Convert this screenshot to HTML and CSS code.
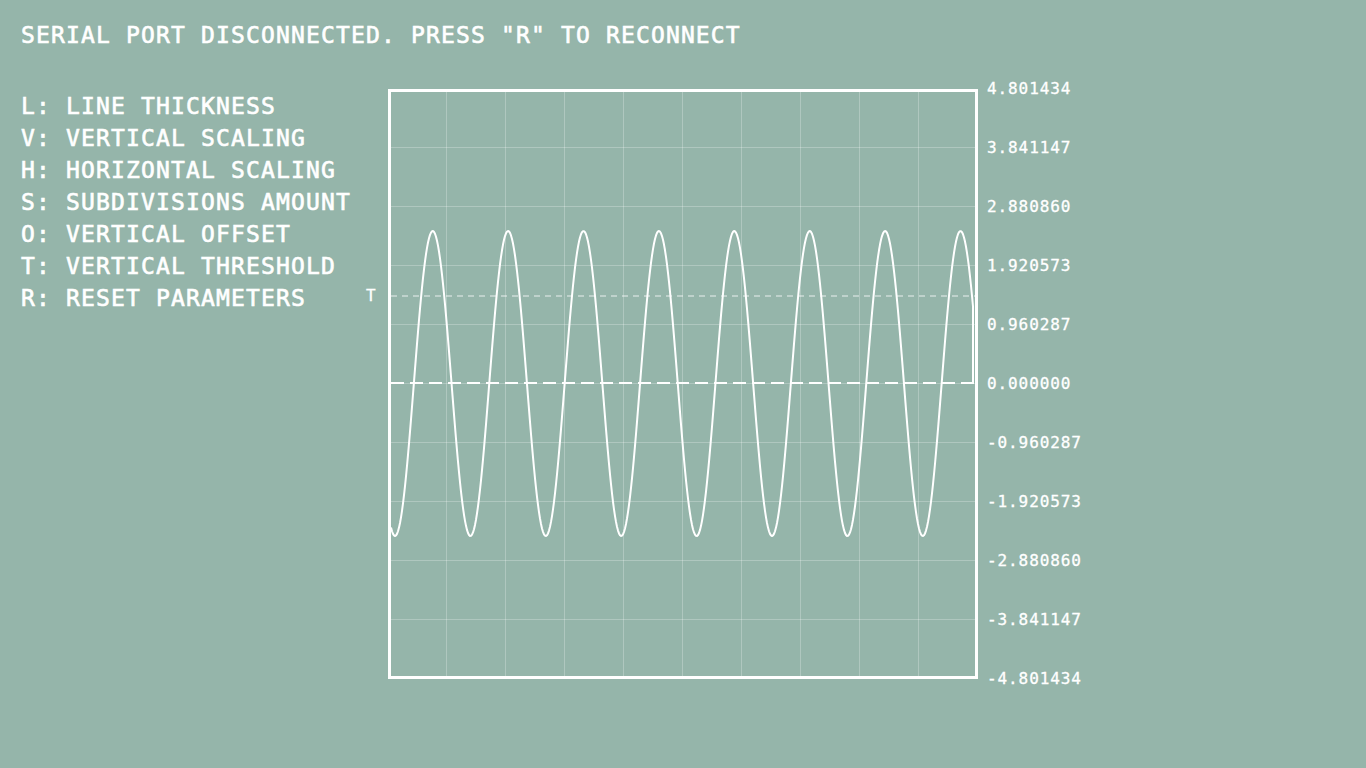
FILE: index.html
```html
<!DOCTYPE html>
<html lang="en">
<head>
    <meta charset="UTF-8">
    <meta name="viewport" content="width=device-width, initial-scale=1.0">
    <title>Serial Plotter</title>
    <link rel="stylesheet" href="styles.css">
</head>
<body>
    <div class="status">SERIAL PORT DISCONNECTED. PRESS "R" TO RECONNECT</div>

    <div class="main">
        <ul class="keys">
            <li>L: LINE THICKNESS</li>
            <li>V: VERTICAL SCALING</li>
            <li>H: HORIZONTAL SCALING</li>
            <li>S: SUBDIVISIONS AMOUNT</li>
            <li>O: VERTICAL OFFSET</li>
            <li>T: VERTICAL THRESHOLD</li>
            <li>R: RESET PARAMETERS</li>
        </ul>

        <div class="scope">
            <span class="threshold-label">T</span>
            <svg class="plot" width="584" height="584" viewBox="0 0 584 584">
                <g class="grid" id="grid"></g>
                <line class="threshold" x1="0" y1="204" x2="584" y2="204" />
                <line class="zero" x1="0" y1="291" x2="584" y2="291" />
                <path class="wave" id="wave" d="" />
            </svg>
        </div>

        <div class="axis">
            <span>4.801434</span>
            <span>3.841147</span>
            <span>2.880860</span>
            <span>1.920573</span>
            <span>0.960287</span>
            <span>0.000000</span>
            <span>-0.960287</span>
            <span>-1.920573</span>
            <span>-2.880860</span>
            <span>-3.841147</span>
            <span>-4.801434</span>
        </div>
    </div>

    <script>
      document.addEventListener("DOMContentLoaded", function () {
        var ns = "http://www.w3.org/2000/svg";
        var grid = document.getElementById("grid");

        // 10 subdivisions, inner lines only
        for (var i = 0; i < 9; i++) {
          var p = 55.5 + i * 59;
          var v = document.createElementNS(ns, "line");
          v.setAttribute("x1", p);
          v.setAttribute("y1", 0);
          v.setAttribute("x2", p);
          v.setAttribute("y2", 584);
          grid.appendChild(v);
          var h = document.createElementNS(ns, "line");
          h.setAttribute("x1", 0);
          h.setAttribute("y1", p);
          h.setAttribute("x2", 584);
          h.setAttribute("y2", p);
          grid.appendChild(h);
        }

        // last buffer of samples: sine, trough at x=4, period 75.4px
        var d = "";
        for (var x = 0; x <= 582; x++) {
          var y = 291.5 + 152.5 * Math.cos(2 * Math.PI * (x - 4) / 75.4);
          d += (x ? "L" : "M") + x + " " + y.toFixed(2);
        }
        d += "L582 291";
        document.getElementById("wave").setAttribute("d", d);
      });
    </script>
</body>
</html>
```

FILE: styles.css
```css
body {
    margin: 0;
    padding: 0;
    background-color: #95b5aa;
    color: #fff;
    font-family: "DejaVu Sans Mono", "Liberation Mono", monospace;
    width: 1366px;
    height: 768px;
    overflow: hidden;
}

.status {
    padding: 19px 0 0 21px;
    font-size: 23px;
    line-height: 32px;
    letter-spacing: 1.15px;
    white-space: nowrap;
    -webkit-text-stroke: 0.6px #fff;
}

.main {
    display: flex;
    align-items: flex-start;
    margin-top: 38px;
}

.keys {
    list-style: none;
    margin: 0;
    padding: 1px 0 0 21px;
    flex: 0 0 388px;
    box-sizing: border-box;
    font-size: 23px;
    line-height: 32px;
    letter-spacing: 1.15px;
    white-space: nowrap;
    -webkit-text-stroke: 0.6px #fff;
}

.scope {
    position: relative;
    flex: 0 0 590px;
    height: 590px;
    box-sizing: border-box;
    border: 3px solid #fff;
}

.plot {
    display: block;
}

.grid line {
    stroke: rgba(255, 255, 255, 0.25);
    stroke-width: 1;
}

.threshold {
    stroke: rgba(255, 255, 255, 0.4);
    stroke-width: 2;
    stroke-dasharray: 6 5;
}

.zero {
    stroke: #fff;
    stroke-width: 2;
    stroke-dasharray: 13 6;
}

.wave {
    fill: none;
    stroke: #fff;
    stroke-width: 2;
    stroke-linejoin: round;
}

.threshold-label {
    position: absolute;
    left: -25px;
    top: 196px;
    font-size: 16px;
    line-height: 16px;
    -webkit-text-stroke: 0.3px #fff;
}

.axis {
    display: flex;
    flex-direction: column;
    justify-content: space-between;
    height: 608px;
    margin: -9px 0 0 9px;
    font-size: 16px;
    line-height: 18px;
    letter-spacing: 0.9px;
    white-space: nowrap;
    -webkit-text-stroke: 0.3px #fff;
}
```
